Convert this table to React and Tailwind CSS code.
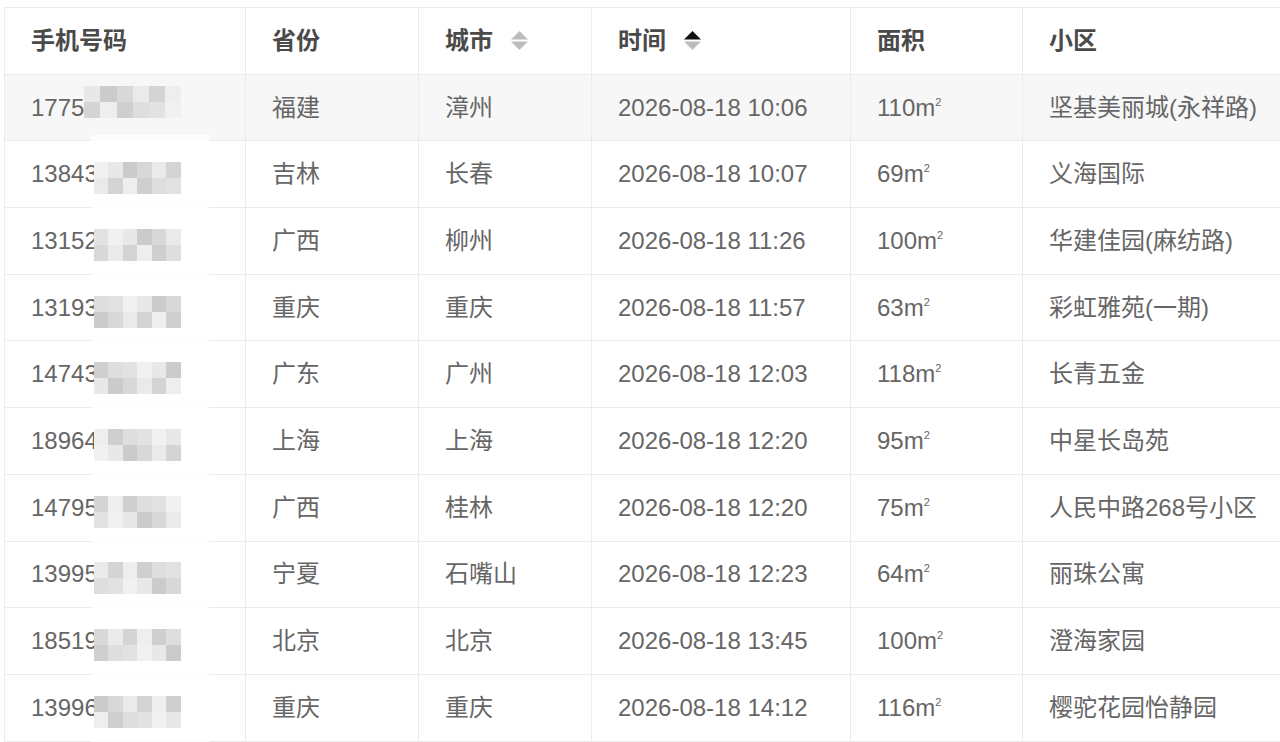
import React from 'react';

const rows = [
  { phone: '1775', prov: '福建', city: '漳州', time: '2026-08-18 10:06', area: '110', name: '坚基美丽城(永祥路)', hover: true },
  { phone: '13843', prov: '吉林', city: '长春', time: '2026-08-18 10:07', area: '69', name: '义海国际' },
  { phone: '13152', prov: '广西', city: '柳州', time: '2026-08-18 11:26', area: '100', name: '华建佳园(麻纺路)' },
  { phone: '13193', prov: '重庆', city: '重庆', time: '2026-08-18 11:57', area: '63', name: '彩虹雅苑(一期)' },
  { phone: '14743', prov: '广东', city: '广州', time: '2026-08-18 12:03', area: '118', name: '长青五金' },
  { phone: '18964', prov: '上海', city: '上海', time: '2026-08-18 12:20', area: '95', name: '中星长岛苑' },
  { phone: '14795', prov: '广西', city: '桂林', time: '2026-08-18 12:20', area: '75', name: '人民中路268号小区' },
  { phone: '13995', prov: '宁夏', city: '石嘴山', time: '2026-08-18 12:23', area: '64', name: '丽珠公寓' },
  { phone: '18519', prov: '北京', city: '北京', time: '2026-08-18 13:45', area: '100', name: '澄海家园' },
  { phone: '13996', prov: '重庆', city: '重庆', time: '2026-08-18 14:12', area: '116', name: '樱驼花园怡静园' },
];

const shades = [
  'bg-[#e8e8e8]', 'bg-[#dedede]', 'bg-[#d4d4d4]', 'bg-[#cbcbcb]', 'bg-[#e2e2e2]',
  'bg-[#eeeeee]', 'bg-[#d8d8d8]', 'bg-[#f1f1f1]', 'bg-[#cfcfcf]', 'bg-[#eaeaea]',
];

const Mosaic = ({ seed }) => (
  <div className={`flex-1 h-[32px] grid grid-cols-6 grid-rows-2 relative z-20 ${seed === 0 ? '-mt-[12px]' : 'mt-[8px] -ml-[4px]'}`}>
    {Array.from({ length: 12 }).map((_, i) => (
      <div key={i} className={shades[(seed * 7 + i * 3 + (i > 5 ? 4 : 0)) % shades.length]} />
    ))}
  </div>
);

const SortIcon = ({ active }) => (
  <svg width="17" height="21" viewBox="0 0 17 21" className="ml-[18px] shrink-0">
    <path d="M8.5 1 L17 9.5 L0 9.5 Z" fill={active ? '#111' : '#bdbdbd'} />
    <path d="M0 11.5 L17 11.5 L8.5 20 Z" fill="#bdbdbd" />
  </svg>
);

const th = 'h-[66.7px] border-r border-b border-[#ececec] px-[26px] text-left font-semibold text-[#4a4a4a] align-middle';
const td = 'h-[66.7px] border-r border-b border-[#ececec] px-[26px] text-[#666] align-middle';

export default function App() {
  return (
    <div className="w-[1280px] h-[742px] overflow-hidden bg-white pt-[7px] pl-[4px] text-2xl" style={{ fontFamily: '"Liberation Sans", "Noto Sans CJK SC", sans-serif' }}>
      <table className="w-[1300px] table-fixed border-collapse border-t border-l border-[#ececec]">
        <colgroup>
          <col className="w-[241px]" />
          <col className="w-[173px]" />
          <col className="w-[173px]" />
          <col className="w-[259px]" />
          <col className="w-[172px]" />
          <col className="w-[282px]" />
        </colgroup>
        <thead>
          <tr>
            <th className={th}>手机号码</th>
            <th className={th}>省份</th>
            <th className={th}>
              <div className="flex items-center">城市<SortIcon /></div>
            </th>
            <th className={th}>
              <div className="flex items-center">时间<SortIcon active /></div>
            </th>
            <th className={th}>面积</th>
            <th className={th}>小区</th>
          </tr>
        </thead>
        <tbody>
          {rows.map((r, i) => (
            <tr key={i} className={r.hover ? 'bg-[#f7f7f7]' : 'bg-white'}>
              <td className={`${td} relative`}>
                <div className="flex items-center w-[150px]">
                  <span>{r.phone}</span>
                  <Mosaic seed={i} />
                </div>
                <div className="absolute left-[86px] w-[118px] -bottom-[5px] h-[10px] bg-white/80 z-10" />
              </td>
              <td className={td}>{r.prov}</td>
              <td className={td}>{r.city}</td>
              <td className={td}>{r.time}</td>
              <td className={td}>
                {r.area}m<span className="relative -top-[10px] text-[11px]">2</span>
              </td>
              <td className={`${td} whitespace-nowrap`}>{r.name}</td>
            </tr>
          ))}
        </tbody>
      </table>
    </div>
  );
}
